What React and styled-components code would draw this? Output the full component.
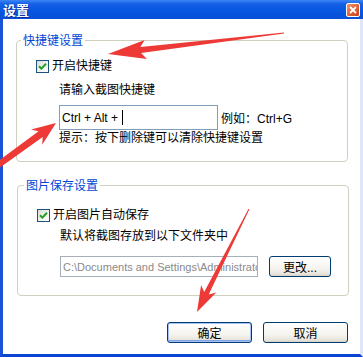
import React from 'react';
import styled, { createGlobalStyle } from 'styled-components';

const GlobalStyle = createGlobalStyle`
    html, body {
        margin: 0;
        padding: 0;
        background: #ffffff;
    }
    body {
        font-family: "Liberation Sans", "Noto Sans CJK SC", sans-serif;
        font-size: 12px;
        color: #000;
    }
`;

const Window = styled.div`
    position: relative;
    width: 363px;
    height: 357px;
    display: flex;
    flex-direction: column;
    overflow: hidden;
    background: #fff;
`;

const TitleBar = styled.div`
    height: 19px;
    flex: none;
    display: flex;
    align-items: center;
    justify-content: space-between;
    padding: 0 3px 0 3px;
    background: linear-gradient(180deg, #3d86f5 0%, #1560e6 20%, #0656e0 60%, #0a4fd6 100%);
`;

const TitleText = styled.span`
    color: #fff;
    font-family: "Noto Sans CJK SC", sans-serif;
    font-weight: bold;
    font-size: 13px;
    line-height: 19px;
    text-shadow: 1px 1px 0 #0b2d9a;
`;

const CloseButton = styled.div`
    width: 12px;
    height: 12px;
    border: 1px solid #fff;
    border-radius: 2px;
    background: linear-gradient(135deg, #f09672 0%, #e0633a 50%, #c2431d 100%);
    display: flex;
    align-items: center;
    justify-content: center;
`;

const Frame = styled.div`
    flex: 1;
    border-left: 3px solid #1b52d6;
    border-right: 3px solid #dfe6f7;
    border-bottom: 3px solid #0b45d4;
    padding: 14px 0 0 13px;
`;

const Group = styled.fieldset`
    margin: ${p => p.$top}px 0 0 ${p => p.$left}px;
    padding: 0 0 ${p => p.$bottom}px 0;
    width: 332px;
    box-sizing: border-box;
    min-width: 0;
    border: 1px solid #d0d0bf;
    border-radius: 4px;
`;

const Legend = styled.legend`
    margin-left: ${p => p.$indent}px;
    padding: 0 2px;
    color: #0046d5;
    font-family: "Noto Sans CJK SC", sans-serif;
    font-size: 12px;
    line-height: 14px;
`;

const CheckRow = styled.label`
    display: flex;
    align-items: center;
    gap: 3px;
    margin-top: ${p => p.$top}px;
    padding-left: 19px;
    height: 14px;
    line-height: 14px;
`;

const CheckBox = styled.span`
    width: 11px;
    height: 11px;
    border: 1px solid #1c5180;
    background: linear-gradient(135deg, #dcdcd5 0%, #f4f4f0 60%, #ffffff 100%);
    display: flex;
    align-items: center;
    justify-content: center;
    flex: none;
`;

const Line = styled.div`
    margin-top: ${p => p.$top}px;
    padding-left: 42px;
    line-height: 14px;
    white-space: nowrap;
`;

const FieldRow = styled.div`
    display: flex;
    align-items: center;
    gap: ${p => p.$gap}px;
    margin-top: ${p => p.$top}px;
    padding-left: 42px;
`;

const TextBox = styled.div`
    width: ${p => p.$w}px;
    height: ${p => p.$h}px;
    box-sizing: border-box;
    border: 1px solid ${p => (p.$disabled ? '#a7afb9' : '#7f9db9')};
    background: #fff;
    color: ${p => (p.$disabled ? '#8a8a8a' : '#000')};
    font-size: ${p => (p.$disabled ? 11 : 12)}px;
    padding-left: 2px;
    display: flex;
    align-items: center;
    white-space: nowrap;
    overflow: hidden;
    flex: none;
`;

const Caret = styled.span`
    display: inline-block;
    width: 1px;
    height: 15px;
    background: #000;
    margin-left: 4px;
`;

const Hint = styled.span`
    white-space: nowrap;
`;

const ButtonRow = styled.div`
    display: flex;
    justify-content: flex-end;
    gap: 11px;
    width: 332px;
    margin-top: 26px;
`;

const XPButton = styled.button`
    width: ${p => p.$w}px;
    height: ${p => p.$h}px;
    padding: 0;
    box-sizing: border-box;
    border: 1px solid #003c74;
    border-radius: 3px;
    font-family: "Liberation Sans", "Noto Sans CJK SC", sans-serif;
    font-size: 12px;
    color: #000;
    background: linear-gradient(180deg, #ffffff 0%, #f5f4ef 60%, #e7e4da 90%, #d6d0c5 100%);
    box-shadow: ${p => (p.$default
        ? 'inset 0 0 0 1px #a7c2f2, inset 0 -1px 0 1px #7fa3e6'
        : 'none')};
`;

const Overlay = styled.svg`
    position: absolute;
    left: 0;
    top: 0;
    pointer-events: none;
`;

function arrowPoints([tx, ty], [px, py], headLen, headW, tailW, neckW) {
    const dx = px - tx;
    const dy = py - ty;
    const len = Math.hypot(dx, dy);
    const ux = dx / len;
    const uy = dy / len;
    const nx = -uy;
    const ny = ux;
    const bx = px - ux * headLen;
    const by = py - uy * headLen;
    const kx = bx + ux * 5;
    const ky = by + uy * 5;
    const pts = [
        [tx + nx * tailW / 2, ty + ny * tailW / 2],
        [kx + nx * neckW / 2, ky + ny * neckW / 2],
        [bx + nx * headW / 2, by + ny * headW / 2],
        [px, py],
        [bx - nx * headW / 2, by - ny * headW / 2],
        [kx - nx * neckW / 2, ky - ny * neckW / 2],
        [tx - nx * tailW / 2, ty - ny * tailW / 2],
    ];
    return pts.map(p => p.map(v => v.toFixed(1)).join(',')).join(' ');
}

// red annotation arrows drawn over the dialog
const arrows = [
    { tail: [284, 33], tip: [108, 54], head: 38, headW: 19, tailW: 1, neckW: 6 },
    { tail: [-6, 168], tip: [56, 123], head: 24, headW: 19, tailW: 6, neckW: 7 },
    { tail: [249, 209], tip: [197, 312], head: 26, headW: 17, tailW: 1, neckW: 5 },
];

const Check = () => (
    <svg width="9" height="9" viewBox="0 0 9 9">
        <path d="M1 4.2 L3.4 6.6 L8 1.8" fill="none" stroke="#21a121" strokeWidth="2" />
    </svg>
);

const App = () => (
    <>
        <GlobalStyle />
        <Window>
            <TitleBar>
                <TitleText>设置</TitleText>
                <CloseButton>
                    <svg width="8" height="8" viewBox="0 0 8 8">
                        <path d="M1 1 L7 7 M7 1 L1 7" stroke="#fff" strokeWidth="1.8" />
                    </svg>
                </CloseButton>
            </TitleBar>
            <Frame>
                <Group $top={0} $left={0} $bottom={16}>
                    <Legend $indent={4}>快捷键设置</Legend>
                    <CheckRow $top={12}>
                        <CheckBox><Check /></CheckBox>
                        开启快捷键
                    </CheckRow>
                    <Line $top={10}>请输入截图快捷键</Line>
                    <FieldRow $top={8} $gap={3}>
                        <TextBox $w={159} $h={25}>
                            Ctrl + Alt +<Caret />
                        </TextBox>
                        <Hint>例如：Ctrl+G</Hint>
                    </FieldRow>
                    <Line $top={1}>提示：按下删除键可以清除快捷键设置</Line>
                </Group>
                <Group $top={16} $left={1} $bottom={18}>
                    <Legend $indent={6}>图片保存设置</Legend>
                    <CheckRow $top={16}>
                        <CheckBox><Check /></CheckBox>
                        开启图片自动保存
                    </CheckRow>
                    <Line $top={7}>默认将截图存放到以下文件夹中</Line>
                    <FieldRow $top={13} $gap={11}>
                        <TextBox $w={198} $h={21} $disabled>
                            C:\Documents and Settings\Administrator
                        </TextBox>
                        <XPButton $w={62} $h={21}>更改...</XPButton>
                    </FieldRow>
                </Group>
                <ButtonRow>
                    <XPButton $w={85} $h={21} $default>确定</XPButton>
                    <XPButton $w={85} $h={21}>取消</XPButton>
                </ButtonRow>
            </Frame>
            <Overlay width="363" height="357" viewBox="0 0 363 357">
                {arrows.map((a, i) => (
                    <polygon
                        key={i}
                        points={arrowPoints(a.tail, a.tip, a.head, a.headW, a.tailW, a.neckW)}
                        fill="#ee3a36"
                    />
                ))}
            </Overlay>
        </Window>
    </>
);

export default App;
